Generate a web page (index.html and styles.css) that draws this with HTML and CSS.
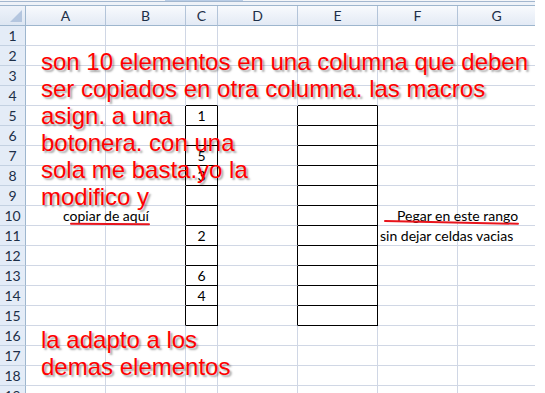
FILE: index.html
```html
<!DOCTYPE html>
<html lang="es">
<head>
<meta charset="utf-8">
<title>Hoja de cálculo</title>
<link rel="stylesheet" href="styles.css">
</head>
<body>
<div class="excel">
  <div class="topbar">
    <div class="strip"><div class="strip-gap"></div><div class="strip-tab"></div></div>
    <div class="strip-line"></div>
  </div>
  <div class="sheet">
    <div class="c corner"><svg class="tri" width="12" height="12" viewBox="0 0 12 12"><polygon points="12,0 12,12 0,12" fill="#b4c6df"/></svg></div>
    <div class="c ch">A</div><div class="c ch">B</div><div class="c ch">C</div><div class="c ch">D</div><div class="c ch">E</div><div class="c ch">F</div><div class="c ch">G</div>

    <div class="c rh">1</div><div class="c"></div><div class="c"></div><div class="c"></div><div class="c"></div><div class="c"></div><div class="c"></div><div class="c"></div>
    <div class="c rh">2</div><div class="c"></div><div class="c"></div><div class="c"></div><div class="c"></div><div class="c"></div><div class="c"></div><div class="c"></div>
    <div class="c rh">3</div><div class="c"></div><div class="c"></div><div class="c"></div><div class="c"></div><div class="c"></div><div class="c"></div><div class="c"></div>
    <div class="c rh">4</div><div class="c"></div><div class="c"></div><div class="c bb"></div><div class="c"></div><div class="c bb"></div><div class="c"></div><div class="c"></div>
    <div class="c rh">5</div><div class="c"></div><div class="c br"></div><div class="c bx num">1</div><div class="c br"></div><div class="c bx"></div><div class="c"></div><div class="c"></div>
    <div class="c rh">6</div><div class="c"></div><div class="c br"></div><div class="c bx num"></div><div class="c br"></div><div class="c bx"></div><div class="c"></div><div class="c"></div>
    <div class="c rh">7</div><div class="c"></div><div class="c br"></div><div class="c bx num low">5</div><div class="c br"></div><div class="c bx"></div><div class="c"></div><div class="c"></div>
    <div class="c rh">8</div><div class="c"></div><div class="c br"></div><div class="c bx num low">3</div><div class="c br"></div><div class="c bx"></div><div class="c"></div><div class="c"></div>
    <div class="c rh">9</div><div class="c"></div><div class="c br"></div><div class="c bx num"></div><div class="c br"></div><div class="c bx"></div><div class="c"></div><div class="c"></div>
    <div class="c rh">10</div><div class="c copy">copiar de aquí</div><div class="c br"></div><div class="c bx num"></div><div class="c br"></div><div class="c bx"></div><div class="c paste">Pegar en este rango</div><div class="c"></div>
    <div class="c rh">11</div><div class="c"></div><div class="c br"></div><div class="c bx num">2</div><div class="c br"></div><div class="c bx"></div><div class="c">sin dejar celdas vacias</div><div class="c"></div>
    <div class="c rh">12</div><div class="c"></div><div class="c br"></div><div class="c bx num"></div><div class="c br"></div><div class="c bx"></div><div class="c"></div><div class="c"></div>
    <div class="c rh">13</div><div class="c"></div><div class="c br"></div><div class="c bx num">6</div><div class="c br"></div><div class="c bx"></div><div class="c"></div><div class="c"></div>
    <div class="c rh">14</div><div class="c"></div><div class="c br"></div><div class="c bx num">4</div><div class="c br"></div><div class="c bx"></div><div class="c"></div><div class="c"></div>
    <div class="c rh">15</div><div class="c"></div><div class="c br"></div><div class="c bx num"></div><div class="c br"></div><div class="c bx"></div><div class="c"></div><div class="c"></div>
    <div class="c rh">16</div><div class="c"></div><div class="c"></div><div class="c"></div><div class="c"></div><div class="c"></div><div class="c"></div><div class="c"></div>
    <div class="c rh">17</div><div class="c"></div><div class="c"></div><div class="c"></div><div class="c"></div><div class="c"></div><div class="c"></div><div class="c"></div>
    <div class="c rh">18</div><div class="c"></div><div class="c"></div><div class="c"></div><div class="c"></div><div class="c"></div><div class="c"></div><div class="c"></div>
    <div class="c rh">19</div><div class="c"></div><div class="c"></div><div class="c"></div><div class="c"></div><div class="c"></div><div class="c"></div><div class="c"></div>
  </div>

  <svg class="marks" width="535" height="393" viewBox="0 0 535 393">
    <line x1="71" y1="223.8" x2="149" y2="224.3" stroke="#e8141c" stroke-width="2" stroke-linecap="round"/>
    <line x1="385" y1="221" x2="518" y2="223.8" stroke="#e8141c" stroke-width="2" stroke-linecap="round"/>
  </svg>

  <div class="note note-top">son 10 elementos en una columna que deben<br>ser copiados en otra columna. las macros<br>asign. a una<br>botonera. con una<br>sola me basta.yo la<br>modifico y</div>
  <div class="note note-bottom">la adapto a los<br>demas elementos</div>
</div>
</body>
</html>
```

FILE: styles.css
```css
html, body {
  margin: 0;
  padding: 0;
  background: #ffffff;
  overflow: hidden;
}

body {
  width: 545px;
  height: 393px;
}

.excel {
  position: relative;
  width: 535px;
  height: 393px;
  overflow: hidden;
  font-family: Lato, "Liberation Sans", sans-serif;
  font-size: 14px;
  color: #000;
}

.topbar {
  height: 6px;
  box-sizing: border-box;
  background: #eef2f8;
  border-bottom: 1px solid #9eb6ce;
}

.strip {
  display: flex;
  height: 1px;
  background: #f4f6f9;
}

.strip-gap {
  width: 165px;
}

.strip-tab {
  width: 78px;
  background: #b9cde6;
}

.strip-line {
  height: 1px;
  background: #a3b7cf;
}

.sheet {
  display: grid;
  grid-template-columns: 26px 80px 80px 32px 80px 80px 80px 78px;
  grid-auto-rows: 20px;
}

.c {
  box-sizing: border-box;
  border-right: 1px solid #d0d7e5;
  border-bottom: 1px solid #d0d7e5;
  line-height: 19px;
  white-space: nowrap;
  padding-left: 2px;
}

.ch {
  background: linear-gradient(#f8fafd, #e3eaf5);
  border-right: 1px solid #b3c4d9;
  border-bottom: 1px solid #9eb6ce;
  text-align: center;
  padding-left: 0;
  color: #1d2f48;
}

.corner {
  background: linear-gradient(#eef3fa, #dde6f2);
  border-right: 1px solid #9eb6ce;
  border-bottom: 1px solid #9eb6ce;
  padding: 0;
  display: flex;
  align-items: flex-end;
  justify-content: flex-end;
}

.tri {
  margin: 0 3px 3px 0;
  display: block;
}

.rh {
  background: #e4ecf7;
  border-right: 1px solid #9eb6ce;
  border-bottom: 1px solid #c3d1e2;
  text-align: center;
  padding-left: 0;
  color: #1d2f48;
}

.bb {
  border-bottom-color: #000;
}

.br {
  border-right-color: #000;
}

.bx {
  border-right-color: #000;
  border-bottom-color: #000;
}

.num {
  text-align: center;
  padding-left: 0;
}

.low {
  line-height: 20px;
}

.copy {
  padding-left: 37px;
}

.paste {
  padding-left: 19px;
}

.marks {
  position: absolute;
  left: 0;
  top: 0;
  pointer-events: none;
}

.note {
  position: absolute;
  left: 41px;
  font-family: "Liberation Sans", Arial, sans-serif;
  font-size: 24px;
  line-height: 27px;
  color: #ff0000;
  white-space: nowrap;
  text-shadow: 2px 2px 2px rgba(0, 0, 0, 0.35);
}

.note-top {
  top: 48px;
}

.note-bottom {
  top: 326px;
}
```
